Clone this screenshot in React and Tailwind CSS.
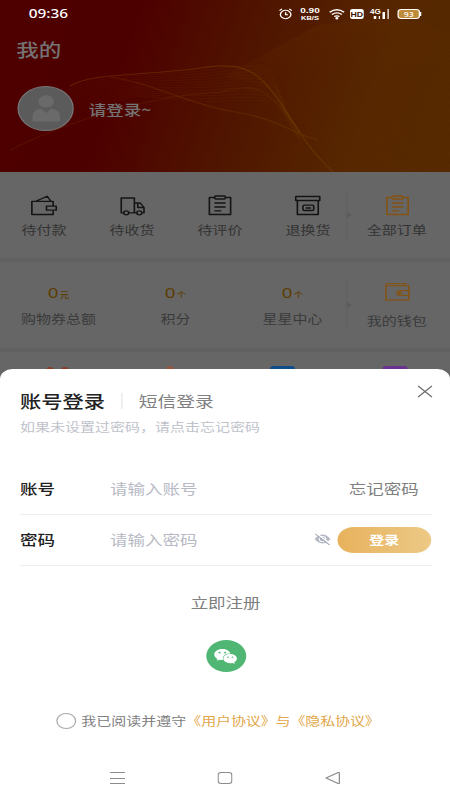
import { FaWeixin } from 'react-icons/fa';

const ORDERS = [
  { label: '待付款', Icon: WalletIcon },
  { label: '待收货', Icon: TruckIcon },
  { label: '待评价', Icon: ClipboardIcon },
  { label: '退换货', Icon: BoxIcon },
];

const ASSETS = [
  { label: '购物券总额', unit: '元' },
  { label: '积分', unit: '个' },
  { label: '星星中心', unit: '个' },
];

function WalletIcon() {
  return (
    <svg width="22" height="22" viewBox="0 0 22 22" fill="none" stroke="currentColor" strokeWidth="1.3">
      <path d="M18.5 12V7.3H1.5v13.2h17V17M5 7l8.8-4.8L16.5 7M13.2 12.2h7.8v4h-7.8z" strokeLinejoin="round" />
    </svg>
  );
}

function TruckIcon() {
  return (
    <svg width="22" height="22" viewBox="0 0 22 22" fill="none" stroke="currentColor" strokeWidth="1.3">
      <path d="M4 18.8H2V4h10.5v14.8H8M12.5 9h4.7l3 4.5v5.3h-1.5M14.5 18.8h-2M15.2 9.2v4.3h5" strokeLinejoin="round" />
      <circle cx="6" cy="18.8" r="2" />
      <circle cx="16.5" cy="18.8" r="2" />
    </svg>
  );
}

function ClipboardIcon() {
  return (
    <svg width="22" height="22" viewBox="0 0 22 22" fill="none" stroke="currentColor" strokeWidth="1.3">
      <path d="M6.8 3.5H2.5v17h17v-17h-4.3" strokeLinejoin="round" />
      <rect x="6.8" y="2" width="8.4" height="3" rx="0.8" />
      <path d="M6.5 9h9M6.5 13h9M6.5 16.8h5.5" />
    </svg>
  );
}

function BoxIcon() {
  return (
    <svg width="22" height="22" viewBox="0 0 22 22" fill="none" stroke="currentColor" strokeWidth="1.3">
      <path d="M1.6 2.5h19.2v4H1.6zM2.9 6.5v14h16.7v-14" strokeLinejoin="round" />
      <rect x="7.4" y="11.2" width="8.6" height="5.3" rx="1" />
      <path d="M9.6 14h4.2" />
    </svg>
  );
}

function PurseIcon() {
  return (
    <svg width="22" height="22" viewBox="0 0 22 22" fill="none" stroke="currentColor" strokeWidth="1.2">
      <path d="M17.5 4.5v-2H3a1.3 1.3 0 0 0-1.3 1.3v15.4H20V4.7H2.5" strokeLinejoin="round" />
      <path d="M20 9.7h-7a2.3 2.3 0 0 0 0 4.6h7z" />
      <circle cx="13" cy="12" r="0.8" />
    </svg>
  );
}

function EyeOffIcon() {
  return (
    <svg width="14" height="14" viewBox="0 0 14 14" fill="none">
      <path d="M0.7 7Q7-1.8 13.3 7Q7 15.8 0.7 7z" fill="#b3b7c3" />
      <circle cx="7" cy="7" r="2.6" stroke="white" strokeWidth="0.9" />
      <path d="M2 1.2L13.2 11.7" stroke="white" strokeWidth="1.2" />
      <path d="M1.2 2L12.6 12.8" stroke="#a4a8b5" strokeWidth="1" />
    </svg>
  );
}

// Thin guilloche lines behind the profile header
function HeaderWaves() {
  const fan = Array.from({ length: 46 }, (_, i) => i);
  const ribbon = Array.from({ length: 12 }, (_, i) => i);
  return (
    <svg className="absolute inset-0 h-full w-full" viewBox="0 0 450 172" preserveAspectRatio="none" fill="none">
      <g stroke="#8a4a00" strokeWidth="0.6" opacity="0.16">
        {fan.map((i) => (
          <path
            key={i}
            d={`M${225 + i * 2} ${76 - i * 1.1}C${270 + i * 3.6} ${86 - i * 1.8} ${280 + i * 5} ${80 - i} ${335 + i * 4.5} 172`}
          />
        ))}
      </g>
      <g stroke="#8a5200" strokeWidth="0.6" opacity="0.16">
        {ribbon.map((i) => (
          <path
            key={i}
            d={`M${60 + i * 3} ${95 + i * 2}C${95 + i * 3} ${70 + i} 160 ${78 + i * 2.4} 225 ${68 + i * 3}S${265 + i} ${85 + i * 2} 300 ${132 + i * 0.8}`}
          />
        ))}
      </g>
      <g stroke="#8a5500" strokeWidth="1.2" opacity="0.36">
        <path d="M70 86C95 72 145 76 200 68S262 74 300 133C310 148 320 160 333 172" />
        <path d="M10 150C75 118 150 96 220 92C250 86 263 79 300 132" opacity="0.5" />
        <path d="M110 77C150 82 190 105 235 112S290 133 318 140" opacity="0.7" />
      </g>
    </svg>
  );
}

function StatusBar() {
  return (
    <div className="relative flex h-7 items-center pl-[23px] pr-[23px] text-white">
      <span className="font-['Noto_Sans'] text-[12.3px] font-medium leading-none">09:36</span>
      <div className="ml-auto flex items-center">
        <svg width="11" height="12" viewBox="0 0 11 12" fill="none" stroke="white" strokeWidth="1.1">
          <circle cx="5.5" cy="6.5" r="4.2" />
          <path d="M5.5 4.2v2.6h1.9M0.6 2.7l2-1.8M10.4 2.7l-2-1.8" />
        </svg>
        <div className="ml-[5px] w-[18px] whitespace-nowrap text-center font-['Liberation_Sans'] font-bold">
          <div className="text-[8px] leading-[8px]">0.90</div>
          <div className="text-[6px] leading-[6px]">KB/S</div>
        </div>
        <svg className="ml-[6px]" width="14" height="12" viewBox="0 0 14 12" fill="none" stroke="white" strokeWidth="1.3">
          <path d="M0.7 4.2Q6.5-0.8 12.3 4.2M2.5 6.4Q6.5 3.2 10.5 6.4M4.4 8.6Q6.5 7 8.6 8.6" />
          <circle cx="6.5" cy="10.3" r="0.6" fill="white" />
        </svg>
        <span className="ml-[3px] flex h-[10px] w-[11px] items-center justify-center rounded-[2px] bg-white font-['Liberation_Sans'] text-[7px] font-bold leading-none text-[#431300]">
          HD
        </span>
        <div className="ml-[6px] flex h-3 w-[15px] items-end gap-[2px] pb-px">
          <span className="relative ml-[2px] h-[3px] w-[1.5px] bg-white">
            <span className="absolute -left-[3px] -top-[7px] font-['Liberation_Sans'] text-[6.5px] font-bold leading-none">4G</span>
          </span>
          <span className="h-[3px] w-[1.5px] bg-white" />
          <span className="h-[7px] w-[1.5px] bg-white" />
          <span className="h-[10px] w-[1.5px] bg-white" />
        </div>
        <div className="ml-[6px] flex items-center">
          <span className="flex h-[10px] w-[18px] items-center justify-center rounded-[3px] border border-white bg-[#bd8a37] font-['Noto_Sans'] text-[7px] font-medium leading-none">
            93
          </span>
          <span className="h-1 w-px bg-white" />
        </div>
      </div>
    </div>
  );
}

function ColumnDivider() {
  return (
    <svg className="shrink-0" width="5" height="50" viewBox="0 0 5 50">
      <path d="M0.5 0V50" stroke="#616161" />
      <path d="M0.5 21L4 25L0.5 29z" fill="#5c5c5c" />
    </svg>
  );
}

function Profile() {
  return (
    <header className="relative h-[172px] overflow-hidden bg-[linear-gradient(105deg,#4e0000_0%,#4d0000_28%,#501700_56%,#562700_80%,#562900_100%)]">
      <HeaderWaves />
      <StatusBar />
      <div className="relative pl-[13px] pt-2 text-[18px] font-medium leading-[26px] text-[#737373]">我的</div>
      <div className="relative mt-6 flex items-center pl-[14px]">
        <div className="flex h-[45px] w-[45px] items-center justify-center rounded-full border border-[#777] bg-[#5b5b5b]">
          <svg width="24" height="27" viewBox="0 0 24 27" fill="#6a6a6a">
            <circle cx="12" cy="6.5" r="6.2" />
            <path d="M1 26.5V22Q1 14.5 8 13.5L12 18L16 13.5Q23 14.5 23 22V26.5z" />
          </svg>
        </div>
        <span className="ml-[12px] text-[14px] font-medium leading-5 text-[#747474]">请登录~</span>
      </div>
    </header>
  );
}

function Orders() {
  return (
    <section className="flex h-[86px]">
      <div className="flex w-[282px]">
        {ORDERS.map(({ label, Icon }) => (
          <div key={label} className="flex w-[70.4px] shrink-0 flex-col items-center pt-[22px] text-[#141414]">
            <Icon />
            <span className="mt-[6px] text-[12px] leading-4 text-[#333]">{label}</span>
          </div>
        ))}
      </div>
      <div className="-ml-[5px] flex items-center">
        <ColumnDivider />
      </div>
      <div className="flex w-[71px] flex-col items-center pt-[22px] text-[#855315]">
        <ClipboardIcon />
        <span className="mt-[6px] text-[12px] leading-4 text-[#333]">全部订单</span>
      </div>
    </section>
  );
}

function Assets() {
  return (
    <section className="flex h-[86px]">
      <div className="flex w-[282px]">
        {ASSETS.map(({ label, unit }) => (
          <div key={label} className="flex w-[93.6px] shrink-0 flex-col items-center pt-5 text-[#5e3c00]">
            <div className="flex items-baseline leading-5">
              <span className="font-['Noto_Sans'] text-[15px]">0</span>
              <span className="ml-px text-[7.5px] font-medium">{unit}</span>
            </div>
            <span className="mt-[6px] text-[12px] leading-4 text-[#3a3a3a]">{label}</span>
          </div>
        ))}
      </div>
      <div className="-ml-[5px] flex items-center">
        <ColumnDivider />
      </div>
      <div className="flex w-[71px] flex-col items-center pt-[19px] text-[#855315]">
        <PurseIcon />
        <span className="mt-[10px] text-[12px] leading-4 text-[#3a3a3a]">我的钱包</span>
      </div>
    </section>
  );
}

function LoginSheet() {
  return (
    <section className="absolute inset-x-0 bottom-0 h-[431px] rounded-t-[10px] bg-white pl-4 pr-[15px]">
      <div className="flex items-center pt-5">
        <h1 className="text-[17px] font-medium leading-6 text-[#222]">账号登录</h1>
        <span className="ml-[13px] h-4 w-px bg-[#e6e6e6]" />
        <span className="ml-[13px] text-[15px] leading-6 text-[#808080]">短信登录</span>
        <svg className="-mt-[20px] ml-auto -mr-px" width="12" height="13" viewBox="0 0 12 13" stroke="#707070" strokeWidth="1.3">
          <path d="M0.4 0.9L11.6 12.1M11.6 0.9L0.4 12.1" />
        </svg>
      </div>
      <p className="mt-[6px] text-[12px] leading-4 text-[#c0c2cb]">如果未设置过密码，请点击忘记密码</p>

      <div className="mt-[29px] flex h-[51px] items-center border-b border-[#eee] pb-[2px] text-[14px]">
        <span className="w-[72px] font-medium text-[#222]">账号</span>
        <span className="text-[#b7bac5]">请输入账号</span>
        <span className="ml-auto mr-[10px] text-[#808080]">忘记密码</span>
      </div>
      <div className="flex h-[51px] items-center border-b border-[#eee] text-[14px]">
        <span className="w-[72px] pb-[2px] font-medium text-[#222]">密码</span>
        <span className="pb-[2px] text-[#b7bac5]">请输入密码</span>
        <span className="ml-auto mr-[5px] pb-[2px]">
          <EyeOffIcon />
        </span>
        <button className="h-[26px] w-[75px] rounded-full bg-linear-to-r from-[#e8b25c] to-[#ecc985] text-[12px] font-bold text-white">
          登录
        </button>
      </div>

      <div className="mt-[26px] text-center text-[14px] leading-5 text-[#808080]">立即注册</div>
      <div className="mx-auto mt-[28px] flex h-8 w-8 items-center justify-center rounded-full bg-[#4fb674]">
        <FaWeixin className="h-[19px] w-[19px] text-white" />
      </div>

      <div className="mt-[41px] flex items-center pl-[29px] text-[12px] leading-4">
        <span className="mr-1 h-4 w-4 rounded-full border border-[#aaa]" />
        <span className="whitespace-nowrap text-[#808080]">
          我已阅读并遵守<span className="tracking-[-0.1px] text-[#e3a74a]">《用户协议》与《隐私协议》</span>
        </span>
      </div>

      <nav className="mt-[42px] flex items-center pl-[72px]">
        <svg width="12" height="14" viewBox="0 0 12 14" stroke="#8c8c8c">
          <path d="M0 1.5h12M0 7.5h12M0 12.5h12" />
        </svg>
        <svg className="ml-[74px]" width="12" height="14" viewBox="0 0 12 14" fill="none" stroke="#8c8c8c">
          <rect x="0.5" y="1.5" width="11" height="11" rx="2.5" />
        </svg>
        <svg className="ml-[74px]" width="13" height="14" viewBox="0 0 13 14" fill="none" stroke="#8c8c8c">
          <path d="M0.8 7L10.5 1.5Q11.5 1.2 11.5 2.2V11.8Q11.5 12.8 10.5 12.5z" strokeLinejoin="round" />
        </svg>
      </nav>
    </section>
  );
}

export default function App() {
  return (
    <div className="h-[800px] w-[450px] overflow-hidden">
      <div className="relative h-[800px] w-[360px] origin-top-left scale-x-125 overflow-hidden bg-[#666] font-['Noto_Sans_CJK_SC',sans-serif]">
        <Profile />
        <Orders />
        <div className="h-1 bg-[#616161]" />
        <Assets />
        <div className="h-1 bg-[#616161]" />
        {/* Shortcut tiles, mostly covered by the sheet */}
        <div className="flex h-10 pt-[14px]">
          <div className="flex w-[92px] justify-center gap-[6px]">
            <span className="mt-px h-6 w-[6px] rounded-full bg-[#8c3a22]" />
            <span className="mt-px h-6 w-[6px] rounded-full bg-[#8c3a22]" />
          </div>
          <div className="flex w-[88px] justify-center">
            <span className="h-6 w-[6px] rounded-full bg-[#93553f]" />
          </div>
          <div className="flex w-[92px] justify-center">
            <span className="h-6 w-5 rounded-[3px] bg-[#0f4c8a]" />
          </div>
          <div className="flex w-[88px] justify-center">
            <span className="h-6 w-5 rounded-[3px] bg-[#6a3290]" />
          </div>
        </div>
        <LoginSheet />
      </div>
    </div>
  );
}
